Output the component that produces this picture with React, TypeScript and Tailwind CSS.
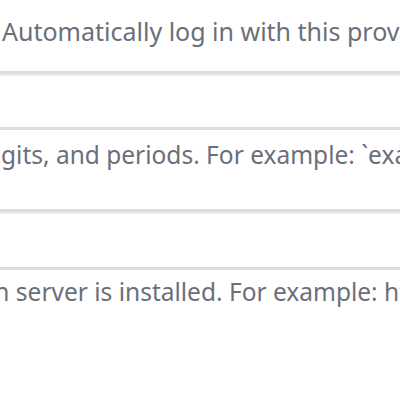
export default function App() {
  return (
    <div className="w-[400px] h-[400px] bg-white overflow-hidden leading-[28px] text-[#6b6f79]" style={{ fontFamily: '"Noto Sans", "Open Sans", sans-serif' }}>
      <div className="pt-[17px] pl-[2px] whitespace-nowrap h-[45px] text-[25px]">Automatically log in with this provider</div>
      <div className="mt-[26px] -mx-[10px] h-[59px] border-t-[3px] border-b-[3px] border-[#dcdde2] shadow-[inset_0_2px_0_#ececef]" />
      <div className="mt-[11px] pl-[1px] whitespace-nowrap h-[28px] text-[24.5px]">gits, and periods. For example: `example.com`</div>
      <div className="mt-[40px] -mx-[10px] h-[61px] border-t-[3px] border-b-[3px] border-[#dcdde2] shadow-[inset_0_2px_0_#ececef]" />
      <div className="mt-[8px] -ml-[12px] whitespace-nowrap h-[28px] text-[24.5px]">in server is installed. For example: https://</div>
    </div>
  );
}
